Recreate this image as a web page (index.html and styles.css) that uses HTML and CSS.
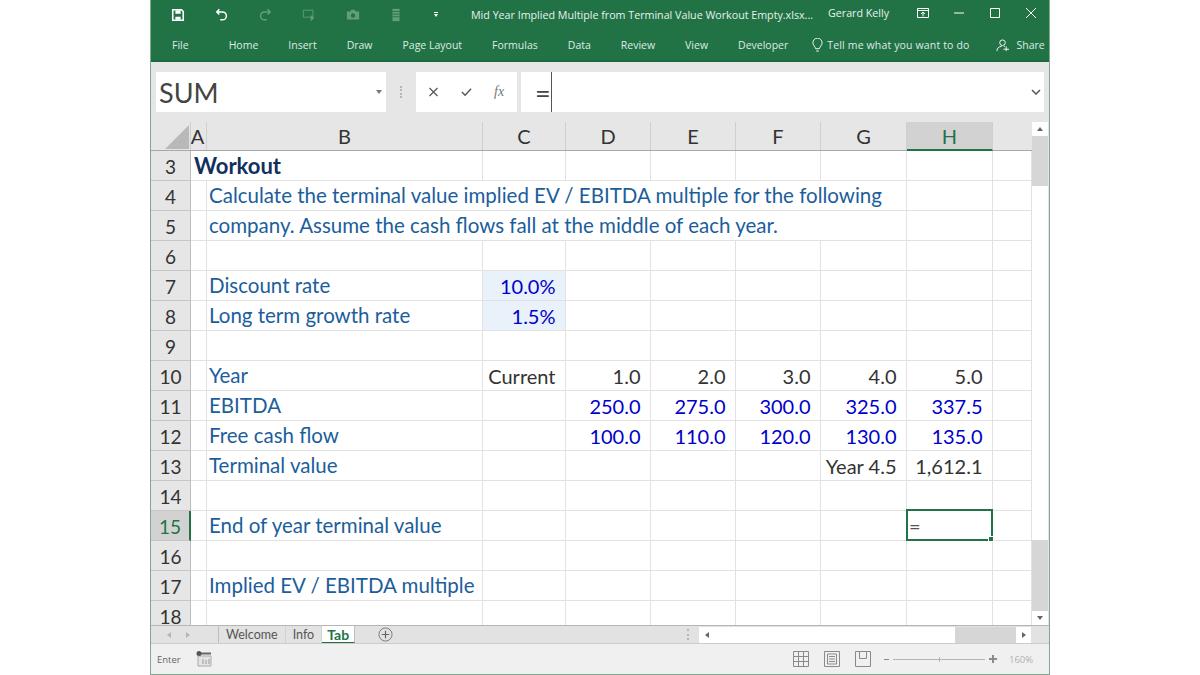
FILE: index.html
```html
<!DOCTYPE html>
<html lang="en">
<head>
<meta charset="UTF-8">
<title>Mid Year Implied Multiple from Terminal Value Workout Empty.xlsx</title>
<link rel="stylesheet" href="styles.css">
</head>
<body>
<div class="window">

  <!-- Title bar -->
  <div class="titlebar">
    <div class="qat">
      <svg class="qat-icon" viewBox="0 0 16 16"><path d="M2 2h10l2 2v10H2z" fill="none" stroke="#fff" stroke-width="1.8"/><path d="M5 2.500h6v4H5zM5 10h6v3.500H5z" fill="#fff"/></svg>
      <svg class="qat-icon" viewBox="0 0 16 16"><path d="M5 1.500 2 4.500l3 3M2.500 4.500h6a4 4 0 0 1 0 9H6" fill="none" stroke="#fff" stroke-width="1.700"/></svg>
      <svg class="qat-icon dim" viewBox="0 0 16 16"><path d="M11 1.500l3 3-3 3M13.500 4.500h-6a4 4 0 0 0 0 9H10" fill="none" stroke="#fff" stroke-width="1.700"/></svg>
      <svg class="qat-icon dim" viewBox="0 0 16 16"><path d="M1.500 2.500h11v8h-11z" fill="none" stroke="#fff"/><path d="M10 8v7l4-3.500z" fill="#fff"/></svg>
      <svg class="qat-icon dim" viewBox="0 0 16 16"><path d="M1 4h4l1-2h4l1 2h4v9H1z" fill="#fff"/><circle cx="8" cy="8.500" r="2.500" fill="#217346"/></svg>
      <svg class="qat-icon dim" viewBox="0 0 16 16"><path d="M4 1h8v14H4z" fill="#fff"/><path d="M4 4h8M4 7h8M4 10h8" stroke="#217346"/></svg>
      <svg class="qat-more" viewBox="0 0 6 6"><path d="M1 0h4v1H1zM1 2h4L3 5z" fill="#fff"/></svg>
    </div>
    <div class="doc-title">Mid Year Implied Multiple from Terminal Value Workout Empty.xlsx...</div>
    <div class="user-name">Gerard Kelly</div>
    <div class="win-btns">
      <svg viewBox="0 0 12 12"><path d="M.5 1.500h11v9H.5z" fill="none" stroke="#fff"/><path d="M.5 3.500h11" stroke="#fff"/><path d="M6 9.500v-4M4 7l2-2 2 2" fill="none" stroke="#fff"/></svg>
      <svg viewBox="0 0 12 12"><path d="M1 6h10" stroke="#fff" stroke-width="1"/></svg>
      <svg viewBox="0 0 12 12"><path d="M1.500 1.500h9v9h-9z" fill="none" stroke="#fff"/></svg>
      <svg viewBox="0 0 12 12"><path d="M1 1l10 10M11 1 1 11" stroke="#fff"/></svg>
    </div>
  </div>

  <!-- Ribbon tabs -->
  <div class="ribbon">
    <span class="file-tab">File</span>
    <div class="ribbon-tabs">
      <span>Home</span><span>Insert</span><span>Draw</span><span>Page Layout</span><span>Formulas</span><span>Data</span><span>Review</span><span>View</span><span>Developer</span>
    </div>
    <div class="tell-me">
      <svg viewBox="0 0 12 16"><path d="M4 11.500C3.500 9 1 8 1 5a5 5 0 0 1 10 0c0 3-2.500 4-3 6.500zM4.500 14h3" fill="none" stroke="#fff"/></svg>
      <span>Tell me what you want to do</span>
    </div>
    <div class="share">
      <svg viewBox="0 0 14 14"><circle cx="7" cy="4" r="3" fill="none" stroke="#fff"/><path d="M1 13c0-3 2-5 5-5M8 11h6M11 8v5M8.500 7.500l1 1" fill="none" stroke="#fff"/></svg>
      <span>Share</span>
    </div>
  </div>

  <!-- Formula bar -->
  <div class="formula-area">
    <div class="name-box"><span>SUM</span><i class="caret-down"></i></div>
    <div class="dots"></div>
    <div class="fx-box">
      <svg viewBox="0 0 10 10"><path d="M1 1l8 8M9 1 1 9" stroke="#555" stroke-width="1.200"/></svg>
      <svg viewBox="0 0 12 10"><path d="M1 5l3.500 3.500L11 1.500" fill="none" stroke="#555" stroke-width="1.500"/></svg>
      <span class="fx-label">fx</span>
    </div>
    <div class="formula-input">
      <span class="formula-text">=</span><i class="text-cursor"></i>
      <svg class="formula-chevron" viewBox="0 0 10 6"><path d="M1 1l4 4 4-4" fill="none" stroke="#555" stroke-width="1.500"/></svg>
    </div>
  </div>

  <!-- Sheet -->
  <div class="sheet-area">
    <div class="sheet">
      <div class="col-heads">
        <div class="corner"><i></i></div>
        <div class="col-head a">A</div>
        <div class="col-head">B</div>
        <div class="col-head">C</div>
        <div class="col-head">D</div>
        <div class="col-head">E</div>
        <div class="col-head">F</div>
        <div class="col-head">G</div>
        <div class="col-head active">H</div>
      </div>

      <div class="row">
        <div class="rh">3</div>
        <div class="c span-ab title-cell">Workout</div><div class="c"></div><div class="c"></div><div class="c"></div><div class="c"></div><div class="c"></div><div class="c"></div><div class="c"></div>
      </div>
      <div class="row">
        <div class="rh">4</div><div class="c"></div>
        <div class="c span-bg label">Calculate the terminal value implied EV / EBITDA multiple for the following</div><div class="c"></div><div class="c"></div>
      </div>
      <div class="row">
        <div class="rh">5</div><div class="c"></div>
        <div class="c span-bg label">company. Assume the cash flows fall at the middle of each year.</div><div class="c"></div><div class="c"></div>
      </div>
      <div class="row">
        <div class="rh">6</div><div class="c"></div><div class="c"></div><div class="c"></div><div class="c"></div><div class="c"></div><div class="c"></div><div class="c"></div><div class="c"></div><div class="c"></div>
      </div>
      <div class="row">
        <div class="rh">7</div><div class="c"></div><div class="c label">Discount rate</div>
        <div class="c num input shade">10.0%</div><div class="c"></div><div class="c"></div><div class="c"></div><div class="c"></div><div class="c"></div><div class="c"></div>
      </div>
      <div class="row">
        <div class="rh">8</div><div class="c"></div><div class="c label">Long term growth rate</div>
        <div class="c num input shade">1.5%</div><div class="c"></div><div class="c"></div><div class="c"></div><div class="c"></div><div class="c"></div><div class="c"></div>
      </div>
      <div class="row">
        <div class="rh">9</div><div class="c"></div><div class="c"></div><div class="c"></div><div class="c"></div><div class="c"></div><div class="c"></div><div class="c"></div><div class="c"></div><div class="c"></div>
      </div>
      <div class="row">
        <div class="rh">10</div><div class="c"></div><div class="c label">Year</div>
        <div class="c num">Current</div><div class="c num">1.0</div><div class="c num">2.0</div><div class="c num">3.0</div><div class="c num">4.0</div><div class="c num">5.0</div><div class="c"></div>
      </div>
      <div class="row">
        <div class="rh">11</div><div class="c"></div><div class="c label">EBITDA</div>
        <div class="c"></div><div class="c num input">250.0</div><div class="c num input">275.0</div><div class="c num input">300.0</div><div class="c num input">325.0</div><div class="c num input">337.5</div><div class="c"></div>
      </div>
      <div class="row">
        <div class="rh">12</div><div class="c"></div><div class="c label">Free cash flow</div>
        <div class="c"></div><div class="c num input">100.0</div><div class="c num input">110.0</div><div class="c num input">120.0</div><div class="c num input">130.0</div><div class="c num input">135.0</div><div class="c"></div>
      </div>
      <div class="row">
        <div class="rh">13</div><div class="c"></div><div class="c label">Terminal value</div>
        <div class="c"></div><div class="c"></div><div class="c"></div><div class="c"></div><div class="c num">Year 4.5</div><div class="c num">1,612.1</div><div class="c"></div>
      </div>
      <div class="row">
        <div class="rh">14</div><div class="c"></div><div class="c"></div><div class="c"></div><div class="c"></div><div class="c"></div><div class="c"></div><div class="c"></div><div class="c"></div><div class="c"></div>
      </div>
      <div class="row">
        <div class="rh selected">15</div><div class="c"></div><div class="c label">End of year terminal value</div>
        <div class="c"></div><div class="c"></div><div class="c"></div><div class="c"></div><div class="c"></div>
        <div class="c active-cell">=<i class="fill-handle"></i></div><div class="c"></div>
      </div>
      <div class="row">
        <div class="rh">16</div><div class="c"></div><div class="c"></div><div class="c"></div><div class="c"></div><div class="c"></div><div class="c"></div><div class="c"></div><div class="c"></div><div class="c"></div>
      </div>
      <div class="row">
        <div class="rh">17</div><div class="c"></div><div class="c label">Implied EV / EBITDA multiple</div>
        <div class="c"></div><div class="c"></div><div class="c"></div><div class="c"></div><div class="c"></div><div class="c"></div><div class="c"></div>
      </div>
      <div class="row">
        <div class="rh">18</div><div class="c"></div><div class="c"></div><div class="c"></div><div class="c"></div><div class="c"></div><div class="c"></div><div class="c"></div><div class="c"></div><div class="c"></div>
      </div>
    </div>

    <div class="vscroll">
      <div class="sb-btn"><i class="tri up"></i></div>
      <div class="v-track"><div class="v-thumb"></div></div>
      <div class="sb-btn"><i class="tri down"></i></div>
    </div>
  </div>

  <!-- Sheet tabs -->
  <div class="tabbar">
    <div class="tab-nav"><i class="tri left pale"></i><i class="tri right pale"></i></div>
    <div class="sheet-tabs">
      <span class="sheet-tab">Welcome</span>
      <span class="sheet-tab">Info</span>
      <span class="sheet-tab current">Tab</span>
    </div>
    <svg class="add-sheet" viewBox="0 0 16 16"><circle cx="8" cy="8" r="7" fill="none" stroke="#777"/><path d="M8 4v8M4 8h8" stroke="#666" stroke-width="1.300"/></svg>
    <div class="dots tab-dots"></div>
    <div class="hscroll">
      <div class="sb-btn"><i class="tri left"></i></div>
      <div class="h-track"><div class="h-thumb"></div></div>
      <div class="sb-btn"><i class="tri right"></i></div>
    </div>
  </div>

  <!-- Status bar -->
  <div class="statusbar">
    <span class="status-mode">Enter</span>
    <svg class="macro" viewBox="0 0 16 16"><path d="M2 5h13v10H2z" fill="#e4e4e4" stroke="#aaa"/><path d="M1 1.500h14v2H1z" fill="#666"/><circle cx="3" cy="2.500" r="2.500" fill="#555"/><path d="M7 8v5M10 9v4M13 8v5" stroke="#999"/></svg>
    <div class="view-btns">
      <svg viewBox="0 0 16 16"><path d="M.5.500h15v15H.5zM.5 5.500h15M.5 10.500h15M5.500.500v15M10.500.500v15" fill="none" stroke="#8a8a8a"/></svg>
      <svg viewBox="0 0 16 16"><path d="M.5.500h15v15H.5z" fill="none" stroke="#8a8a8a"/><path d="M3.500 3v10h9V3zM5 5.500h6M5 8h6M5 10.500h6" fill="none" stroke="#8a8a8a"/></svg>
      <svg viewBox="0 0 16 16"><path d="M.5.500h15v15H.5zM4.500.500v7h7v-7" fill="none" stroke="#8a8a8a"/></svg>
    </div>
    <div class="zoom-slider">
      <span class="zoom-minus"></span>
      <div class="zoom-line"><i></i></div>
      <span class="zoom-plus"></span>
    </div>
    <span class="zoom-pct">160%</span>
  </div>
</div>
</body>
</html>
```

FILE: styles.css
```css
* {
  box-sizing: border-box;
}

body {
  margin: 0;
  background-color: #ffffff;
  font-family: "Open Sans", sans-serif;
}

.window {
  width: 900px;
  height: 675px;
  margin: 0 auto;
  display: flex;
  flex-direction: column;
  border-left: 1px solid #7fa894;
  border-right: 1px solid #7fa894;
  border-bottom: 1px solid #7fa894;
  background-color: #e6e6e6;
  overflow: hidden;
}

/* title bar */
.titlebar {
  height: 29px;
  display: flex;
  align-items: center;
  background-color: #217346;
  color: #e8f1ec;
  font-size: 10.7px;
}

.qat {
  width: 320px;
  padding-left: 20px;
  display: flex;
  align-items: center;
  flex: none;
}

.qat-icon {
  width: 14px;
  height: 14px;
  margin-right: 29.7px;
  flex: none;
}

.qat-icon.dim {
  opacity: 0.3;
}

.qat-more {
  width: 6px;
  height: 6px;
}

.doc-title {
  flex: none;
  width: 357px;
  white-space: nowrap;
}

.user-name {
  flex: none;
  width: 89px;
  margin-top: -3px;
}

.win-btns {
  display: flex;
  gap: 24px;
  margin-top: -3px;
}

.win-btns svg {
  width: 12px;
  height: 12px;
}

/* ribbon */
.ribbon {
  height: 33px;
  display: flex;
  align-items: center;
  background-color: #217346;
  color: #dfeae4;
  font-size: 10.5px;
  border-bottom: 2px solid #1d6a40;
  padding-top: 1px;
  white-space: nowrap;
}

.file-tab {
  margin-left: 21px;
  margin-right: 40px;
}

.ribbon-tabs {
  display: flex;
  gap: 30px;
}

.tell-me {
  margin-left: 24px;
  display: flex;
  align-items: center;
  gap: 4px;
  letter-spacing: 0.15px;
}

.tell-me svg {
  width: 11px;
  height: 15px;
}

.share {
  margin-left: 27px;
  display: flex;
  align-items: center;
  gap: 7px;
}

.share svg {
  width: 13px;
  height: 13px;
}

/* formula bar */
.formula-area {
  height: 60px;
  padding: 10px 0 10px 5px;
  display: flex;
  flex: none;
}

.name-box {
  width: 230px;
  display: flex;
  align-items: center;
  justify-content: space-between;
  padding: 0 4px 0 3px;
  background-color: #ffffff;
  font-family: Lato, sans-serif;
  font-size: 27px;
  color: #444444;
}

.caret-down {
  border-left: 3px solid transparent;
  border-right: 3px solid transparent;
  border-top: 4px solid #777777;
}

.dots {
  width: 2px;
  border-left: 2px dotted #b5b5b5;
}

.name-box + .dots {
  margin: 14px;
}

.fx-box {
  width: 101px;
  background-color: #ffffff;
  display: flex;
  align-items: center;
  padding-left: 12px;
  gap: 22px;
  margin-right: 4px;
}

.fx-box svg {
  width: 11px;
  height: 10px;
}

.fx-label {
  font-family: "Liberation Serif", serif;
  font-style: italic;
  font-size: 14px;
  color: #777777;
}

.formula-input {
  flex: 1;
  margin-right: 5px;
  background-color: #ffffff;
  display: flex;
  align-items: center;
  padding-left: 14px;
  font-family: Lato, sans-serif;
  font-size: 27px;
  color: #444444;
}

.text-cursor {
  width: 1px;
  height: 40px;
  margin-left: 0;
  background-color: #555555;
}

.formula-chevron {
  width: 10px;
  height: 6px;
  margin-left: auto;
  margin-right: 3px;
}

/* sheet */
.sheet-area {
  height: 503px;
  flex: none;
  display: flex;
  overflow: hidden;
}

.sheet {
  width: 881px;
  flex: none;
  background-color: #ffffff;
  font-family: Lato, sans-serif;
  overflow: hidden;
}

.col-heads,
.row {
  display: grid;
  grid-template-columns: 40px 16px 276px 83px 85px 85px 85px 86px 86px 39px;
}

.col-heads {
  height: 29px;
  background-color: #e6e6e6;
  border-bottom: 1px solid #a9a9a9;
  font-size: 20px;
  color: #333333;
}

.corner {
  position: relative;
  border-right: 1px solid #cfcfcf;
}

.corner i {
  position: absolute;
  right: 1px;
  bottom: 1px;
  width: 0;
  height: 0;
  border-left: 24px solid transparent;
  border-bottom: 24px solid #b9b9b9;
}

.col-head {
  display: flex;
  align-items: center;
  justify-content: center;
  border-right: 1px solid #cfcfcf;
}

.col-head.a {
  padding-right: 2px;
}

.col-head.active {
  background-color: #d2d2d2;
  border-bottom: 2px solid #217346;
  margin-bottom: -1px;
  color: #217346;
}

.row {
  height: 30px;
  font-size: 20px;
  color: #333333;
}

.rh {
  display: flex;
  align-items: center;
  justify-content: center;
  padding-top: 1px;
  background-color: #e6e6e6;
  border-right: 1px solid #bdbdbd;
  border-bottom: 1px solid #c6c6c6;
  font-size: 19px;
  color: #333333;
}

.rh.selected {
  background-color: #d2d2d2;
  border-right: 2px solid #217346;
  color: #217346;
}

.c {
  display: flex;
  align-items: center;
  border-right: 1px solid #e2e2e2;
  border-bottom: 1px solid #e2e2e2;
  white-space: nowrap;
}

.span-ab {
  grid-column: span 2;
}

.span-bg {
  grid-column: span 6;
}

.title-cell {
  padding-left: 3px;
  font-size: 22px;
  font-weight: 700;
  color: #12305e;
}

.label {
  padding: 0 0 2px 2px;
  font-size: 20.5px;
  color: #1b5e9b;
}

.num {
  justify-content: flex-end;
  padding-right: 9.5px;
}

.input {
  color: #0000cc;
}

.shade {
  background-color: #e9f1fb;
}

.active-cell {
  position: relative;
  margin: -2px 0 0 -1px;
  border: 2px solid #217346;
  padding: 2px 0 0 1px;
  font-size: 20px;
  color: #555555;
  z-index: 1;
}

.fill-handle {
  position: absolute;
  right: -3px;
  bottom: -3px;
  width: 6px;
  height: 6px;
  background-color: #217346;
  border: 1px solid #ffffff;
}

/* scrollbars */
.vscroll {
  flex: 1;
  display: flex;
  flex-direction: column;
  padding-right: 1px;
}

.sb-btn {
  flex: none;
  width: 15px;
  height: 14px;
  display: flex;
  align-items: center;
  justify-content: center;
  background-color: #ffffff;
}

.vscroll .sb-btn {
  width: 16px;
}

.v-track {
  flex: 1;
  background-color: #d6d6d6;
  padding-top: 50px;
  width: 16px;
}

.v-thumb {
  height: 354px;
  background-color: #ffffff;
}

.tri {
  width: 0;
  height: 0;
  display: block;
}

.tri.up {
  border-left: 3px solid transparent;
  border-right: 3px solid transparent;
  border-bottom: 4px solid #666666;
}

.tri.down {
  border-left: 3px solid transparent;
  border-right: 3px solid transparent;
  border-top: 4px solid #666666;
}

.tri.left {
  border-top: 3px solid transparent;
  border-bottom: 3px solid transparent;
  border-right: 4px solid #666666;
}

.tri.right {
  border-top: 3px solid transparent;
  border-bottom: 3px solid transparent;
  border-left: 4px solid #666666;
}

.tri.pale {
  opacity: 0.35;
}

/* tab bar */
.tabbar {
  height: 19px;
  flex: none;
  display: flex;
  align-items: center;
  padding-right: 18px;
  background-color: #e2e2e2;
  border-top: 1px solid #b5b5b5;
  border-bottom: 1px solid #cccccc;
}

.tab-nav {
  width: 67px;
  display: flex;
  gap: 15px;
  padding-left: 16px;
  flex: none;
}

.sheet-tabs {
  display: flex;
  height: 100%;
  font-family: Lato, sans-serif;
  font-size: 12.5px;
  color: #555555;
  border-left: 1px solid #bdbdbd;
}

.sheet-tab {
  padding: 0 7px;
  display: flex;
  align-items: center;
  border-right: 1px solid #d2d2d2;
}

.sheet-tab.current {
  padding: 0 5px;
  background-color: #ffffff;
  color: #217346;
  font-size: 14px;
  font-weight: 700;
  border-bottom: 1px solid #217346;
  border-right: 1px solid #bdbdbd;
}

.add-sheet {
  width: 15px;
  height: 15px;
  margin-left: 23px;
  flex: none;
}

.tab-dots {
  height: 11px;
  margin: 0 10px 0 auto;
  flex: none;
}

.hscroll {
  display: flex;
  align-items: center;
  height: 17px;
}

.hscroll .sb-btn {
  height: 16px;
}

.h-track {
  width: 302px;
  height: 16px;
  background-color: #d6d6d6;
}

.h-thumb {
  width: 241px;
  height: 100%;
  background-color: #ffffff;
}

/* status bar */
.statusbar {
  flex: 1;
  display: flex;
  align-items: center;
  background-color: #f0f0f0;
  font-size: 9.5px;
  color: #666666;
}

.status-mode {
  margin-left: 6px;
  width: 39px;
}

.macro {
  width: 16px;
  height: 16px;
}

.view-btns {
  margin-left: 581px;
  display: flex;
  gap: 15px;
}

.view-btns svg {
  width: 16px;
  height: 16px;
}

.zoom-slider {
  margin-left: 13px;
  display: flex;
  align-items: center;
  gap: 4px;
}

.zoom-minus {
  width: 5px;
  height: 1px;
  background-color: #8a8a8a;
}

.zoom-line {
  position: relative;
  width: 92px;
  height: 1px;
  background-color: #b5b5b5;
}

.zoom-line i {
  position: absolute;
  left: 46px;
  top: -2px;
  width: 1px;
  height: 5px;
  background-color: #b5b5b5;
}

.zoom-plus {
  position: relative;
  width: 8px;
  height: 2px;
  background-color: #8a8a8a;
}

.zoom-plus::after {
  content: "";
  position: absolute;
  left: 3px;
  top: -3px;
  width: 2px;
  height: 8px;
  background-color: #8a8a8a;
}

.zoom-pct {
  margin-left: 12px;
  color: #b0b0b0;
}
```
